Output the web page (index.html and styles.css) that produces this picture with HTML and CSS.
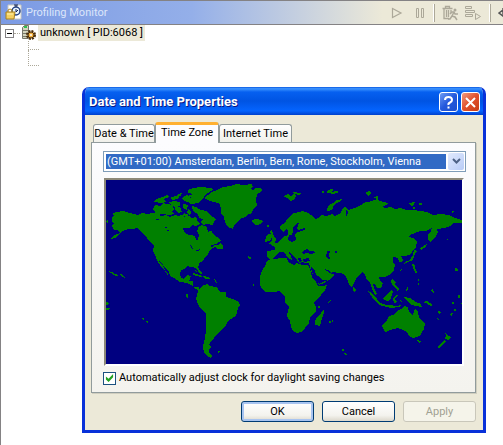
FILE: index.html
```
<!DOCTYPE html>
<html lang="en">
<head>
  <meta charset="UTF-8" />
  <meta name="viewport" content="width=device-width, initial-scale=1" />
  <title>Profiling Monitor</title>
  <link rel="stylesheet" href="styles.css">
</head>
<body>

  <main class="view">
    <header class="view-bar">
      <svg class="view-icon" width="17" height="17" viewBox="0 0 17 17">
        <path d="M3 1h13v14H3z" fill="#fff" stroke="#c8c8c0"/>
        <circle cx="11" cy="7" r="4" fill="#e8f4ff" stroke="#224080" stroke-width="1.5"/>
        <path d="M9 1h4M11 1v2M11 5v3l2-2" fill="none" stroke="#102050"/>
        <path d="M3 8V6q2-2 4 0v2" fill="none" stroke="#b08820"/>
        <path d="M1 8h9l-1 7H1z" fill="#f5d060" stroke="#a88020"/>
        <path d="M2 10h6" stroke="#fff3b0"/>
      </svg>
      <h1>Profiling Monitor</h1>
      <div class="tools">
        <button aria-label="Resume"><svg width="12" height="12" viewBox="0 0 12 12"><path d="M1.5 1.5v9L10 6z" fill="none" stroke="#aca899" stroke-width="1.2"/></svg></button>
        <button aria-label="Pause"><svg width="12" height="12" viewBox="0 0 12 12"><path d="M2.5 1.5h2v9h-2zM7.5 1.5h2v9h-2z" fill="none" stroke="#aca899"/></svg></button>
        <span class="sep"></span>
        <button aria-label="Run garbage collection"><svg width="16" height="16" viewBox="0 0 16 16"><path d="M.5 3.500h10M3.500 3V1.500h4V3M2 4v9.500h5M4.500 5v7M6.500 5v7M9 5v3" fill="none" stroke="#aca899" stroke-width="1.3"/><circle cx="13" cy="5" r="1.500" fill="#aca899"/><path d="M12 7l-2 4 3 1 2 3M10 11l-2 3H6M8 9l2-2h2l1 2h3" fill="none" stroke="#aca899" stroke-width="1.5"/></svg></button>
        <button aria-label="Collect references"><svg width="17" height="16" viewBox="0 0 17 16"><path d="M.5 1.500h6v2h-6zM.5 5.500h9v2h-9zM.5 9.500h7v2h-7zM10.500 8.500v6l5-3z" fill="none" stroke="#aca899"/></svg></button>
        <span class="sep"></span>
        <button class="cut" aria-label="Refresh"><svg width="12" height="14" viewBox="0 0 12 14"><path d="M1 7l4-3v6zM5 4V2M5 7h7" fill="none" stroke="#555" stroke-width="1.5"/></svg></button>
      </div>
    </header>

    <ul class="tree">
      <li>
        <div class="node">
          <button class="toggle" aria-label="Collapse"></button>
          <span class="dots"></span>
          <svg width="15" height="16" viewBox="0 0 15 16">
            <path d="M1.500 2.500l2-2h4v13h-6z" fill="#d4d4bc" stroke="#77776a"/>
            <path d="M3 2h3" stroke="#30c050" stroke-width="2"/>
            <path d="M2 5.500h5M2 8.500h5M2 11.500h5" stroke="#77776a"/>
            <circle cx="10" cy="10" r="4" fill="none" stroke="#4a2c08" stroke-width="2" stroke-dasharray="2 1.140"/>
            <circle cx="10" cy="10" r="3" fill="#f0b040" stroke="#4a2c08"/>
            <circle cx="10" cy="10" r="1" fill="#fff"/>
          </svg>
          <span class="label">unknown [ PID:6068 ]</span>
        </div>
        <div class="branch"></div>
        <div class="branch"></div>
      </li>
    </ul>
  </main>

  <section class="dialog" role="dialog" aria-labelledby="dialog-title">
    <header class="title-bar">
      <h2 id="dialog-title">Date and Time Properties</h2>
      <button class="help" aria-label="Help"><svg width="11" height="13" viewBox="0 0 11 13"><path d="M2 4q0-3 3.500-3T9 4q0 1.500-2 2.500T5.500 9M5.500 10.500v2" fill="none" stroke="#fff" stroke-width="2"/></svg></button>
      <button class="close" aria-label="Close"><svg width="11" height="11" viewBox="0 0 11 11"><path d="M1 1l9 9M10 1l-9 9" stroke="#fff" stroke-width="2"/></svg></button>
    </header>

    <div class="dialog-body">
      <div class="tabs" role="tablist">
        <button role="tab">Date &amp; Time</button>
        <button role="tab" class="active" aria-selected="true">Time Zone</button>
        <button role="tab">Internet Time</button>
      </div>

      <div class="panel">
        <div class="combo">
          <select aria-label="Time zone">
            <option>(GMT+01:00) Amsterdam, Berlin, Bern, Rome, Stockholm, Vienna</option>
          </select>
          <span class="arrow"><svg width="9" height="7" viewBox="0 0 9 7"><path d="M1 1l3.500 3.500L8 1" fill="none" stroke="#4d6185" stroke-width="2"/></svg></span>
        </div>

        <svg class="map" viewBox="106 180 356 184" role="img" aria-label="World map">
          <g class="land">
            <!-- North and Central America -->
            <path d="M112 217L114 216 113 213 117 212 122 211 127 212 129 213 134 214 138 215 142 213 147 214 153 213 158 214 161 216 166 215 170 217 175 215 178 216 182 215 185 217 189 216 192 218 195 217 197 219 196 223 198 224 196 226 192 225 189 228 183 228 184 232 186 234 190 235 195 236 196 240 198 240 199 235 197 231 199 226 202 225 207 227 208 232 210 231 211 230 214 235 217 237 221 241 216 244 209 246 212 247 215 245 219 245 220 243 223 246 223 249 218 249 215 247 210 250 208 254 205 257 203 261 200 262 199 265 197 267 199 269 202 273 201 275 198 271 196 268 191 267 187 266 184 269 181 270 180 274 181 278 184 279 187 275 191 276 189 281 193 281 193 287 199 287 199 290 195 289 191 285 187 283 180 282 174 278 170 276 169 272 165 268 162 263 159 261 163 266 165 270 168 274 169 277 165 271 161 267 157 260 155 255 153 251 154 245 150 242 147 238 144 234 140 231 137 228 132 229 128 229 125 230 120 233 117 237 111 239 113 236 120 233 118 230 114 230 112 226 114 223 112 222z"/>
            <!-- Arctic islands -->
            <path d="M188 190l5-2 7-1 12 1 1 2-5 3-3 2-2 4-3 2-2 2-7 1-4-3 5-3-5-2 6-2-5-1z"/>
            <path d="M154 202l2-3 7-2 4-2 2 2-5 2 2 3-5 1zM153 209l2-4 5 1 3-3 4 1 5 1 2 4-2 2 2 3-5 1-7-1-5 1zM171 197l5-1 4 1-3 2-5 1zM178 194l4-1-1 3-4 1zM169 202l5-1 6 1v4l-5 1-4-2zM176 206l4 1 2 5-4 1-3-4zM183 204l5 1-1 5-4-2zM184 196l4-1 3 4-4 3-5-3zM184 213l5 2-3 2-4-2z"/>
            <path d="M192 206l4 1 5 3 6 1 3 4 6 4-2 3-1 3-6-1-4 1-3-3 3-3-4-1-1-4-5-3zM188 209l3 3-1 4-3-3zM193 223l4-2 3 3-4 2z"/>
            <!-- Greenland and Iceland -->
            <path d="M204 198L208 195 212 192 217 190 223 187 230 186 236 184 244 185 252 184 253 187 250 188 253 190 256 188 261 188 262 190 259 193 257 194 256 200 257 206 253 209 252 213 247 215 245 217 240 219 237 223 234 225 233 229 230 228 227 226 225 222 224 217 221 213 221 208 219 203 213 202 208 200z"/>
            <path d="M252 220l4-1 5 1 2 1-2 3-5 1-3-2z"/>
            <!-- South America -->
            <path d="M199 289l5-4 3-1 2 2 8 1 2 4 2 1h5v5l3 1 4 1 6 3 1 3-2 3-1 4-1 4-5 3-3 2-2 4-3 4-3 2-3 3-3 4-3 3-2 4 2 2-2 3v3l3 3-1 2-3-1-4-4-1-6 1-5 1-4 1-8v-17l-5-4-3-5-2-5 1-4 1-4z"/>
            <!-- Africa -->
            <path d="M267 261L271 259 275 259 280 258 287 258 288 262 294 265 297 263 302 265 308 265 310 269 312 277 316 282 318 286 322 286 327 285 325 290 321 295 317 299 314 303 316 307 316 312 312 315 310 318 309 323 306 326 304 330 301 332 297 333 294 332 291 327 290 321 287 316 288 311 289 307 285 302 285 296 282 294 279 291 274 292 265 292 262 289 260 285 260 277 262 271 265 266z"/>
            <path d="M324 309v4l-2 5-2 8-5-1v-4l3-5 3-3z"/>
            <!-- Europe and Asia -->
            <path d="M280 228L281 225 285 223 288 218 291 215 294 213 299 212 303 211 308 213 313 216 315 219 318 218 321 215 326 216 332 214 335 216 341 213 342 209 345 207 348 210 351 209 355 208 361 205 363 203 367 202 372 201 377 199 380 201 388 203 387 205 382 206 384 208 391 207 395 209 401 208 406 210 413 210 420 211 427 212 433 215 441 214 449 215 455 218 462 220 462 223 453 223 450 226 444 228 437 229 438 232 436 236 433 239 430 242 428 240 428 235 431 231 432 228 426 231 420 231 415 233 410 235 408 237 414 238 417 242 416 247 413 250 411 254 406 256 401 256 403 260 401 262 399 262 398 258 393 257 393 262 395 265 394 270 391 274 385 277 379 277 380 281 383 283 381 288 377 288 375 284 373 284 374 288 377 294 375 295 372 289 370 282 367 280 365 275 363 272 359 275 356 279 353 285 352 287 350 286 346 277 343 274 340 273 331 272 334 275 329 280 324 283 319 285 316 279 312 273 310 267 309 263 305 263 302 262 299 263 297 260 295 258 292 255 290 252 288 253 291 256 292 260 289 259 286 255 284 252 280 252 277 254 274 258 270 260 267 257 267 251 275 250 275 247 270 244 272 243 277 243 281 239 285 236 288 235 288 231 286 229 283 232z"/>
            <path d="M266 236l3-2 3 1-1 5-6 2zM270 231l2-1 1 4 3 5-1 4-6 1 3-4z"/>
            <!-- Polar islands -->
            <path d="M285 195l3-1 3 2 3-2 2 2-2 4-4 1-3-3-3-1zM293 192l8 1-2 2-5-1zM319 192l5-1v2zM326 192l5-3 3 1-3 2 6-1 2 1-5 2-7-1zM327 211l1-5 5-3 4-3 6-1-4 3-5 3-2 5zM365 193l4-2 2 2-2 3zM374 197l4-1v3l-4-1zM409 203l6-1-1 3-3 1zM419 203h3v2h-3zM450 212l4-1-1 2zM413 207l3 1-3 1z"/>
            <!-- Japan, Taiwan, Philippines -->
            <path d="M414 250l3 1-2 2-2 7-5 2-4 2 1-2 5-2 3-5zM420 248l7-4-1 3-5 3zM400 270l2-1-1 3zM412 264l3 1 1 7-2-1zM392 279l4 3-1 3 4 3-2 1-4-3-2-4zM397 287l3 2-3 2zM381 276l4-1-1 2zM353 287l3 3-2 2-1-3z"/>
            <!-- Indonesia and New Guinea -->
            <path d="M368 291l4 2 5 6 4 5-1 1-6-5zM380 303l7 2 3 1-1 1-8-1zM383 298l4-4 4-4 2 2-2 6-3 3-4-1zM393 298l4-3 1 1-4 3 3 3-3 1zM388 305l9 1 4-1-1 2-11 1zM399 300l4 1-2 1zM404 297l6 1 6 4 5 2 1 3-7-1-5-2-5-5zM422 302l5-1 6 4-2 1-5-3z"/>
            <!-- Australia and New Zealand -->
            <path d="M387 321l1-4 7-3 3-4 3-1 3-3 4 1 1 5 4 3 2-7 3 4 1 5 3 4 3 3-1 5-3 5-2 2-6 2-3-1-3-5-4-2-5-2-5 1-5 2-3 1-2-4-1-3zM417 340l4 1-2 2zM445 332l3 4 3 1-3 3-3-1 1-3zM444 340l2 1-5 6-3 1 1-3z"/>
            <!-- Caribbean and Pacific specks -->
            <path d="M193 273l4 1 5 2-1 1-8-2zM195 270l2 1-1 1zM203 276l5 1 3 2h-6zM213 279l3 1 1 4-2-3zM108 271l4 1 2 2 5 1 2-1 4 4-2-1-3-2-4 1-5-3zM106 302l3 1-1 2h-2zM106 308h4l-1 2h-3zM140 317l5 2-2 1zM146 321l3 1-2 1zM186 294h2v4l-2-1zM106 221l2-1v3l-2-1zM248 256l4 2-3 1zM252 285l2-1v3zM216 352l4-1-1 2zM267 225h2v2h-2zM327 303l4-4v2l-3 2zM318 306h2v2h-2zM329 321h2v2h-2zM332 320h1v2h-1zM342 349h2v2h-2zM344 353l3 1-1 2zM406 290l2-4v4l-2 1zM415 271h2v2h-2zM418 279h1v2h-1zM418 283h1v2h-1zM431 290l2-1 1 4-2-1zM438 311l3 1-2 2zM436 318l3 1-1 1zM449 314l4-1-1 3zM452 302h2v2h-2zM454 309h2v2h-2zM458 295h2v3h-2zM455 268l3 1v2h-3zM438 236l3 1zM447 239h1v1h-1zM461 303h1v1h-1z"/>
          </g>
          <!-- Inland seas and lakes -->
          <g class="water">
            <path d="M289 235L292 235 293 232 293 228 297 223 299 223 297 228 298 230 305 228 305 230 298 232 295 234 296 240 292 242 288 240z"/>
            <path d="M302 253L304 250 308 249 309 251 314 251 315 253 311 254 307 253 303 254zM327 251h3l-1 4 1 3-1 1-3-2zM335 251h2v2h-2z"/>
            <path d="M156 219h3v1h-3zM165 227h2v1h-2zM167 230h2v1h-2zM188 244l4 2 1 4-2-3zM195 251l5-2-2 2z"/>
            <path d="M298 258h3l1 3-3 1zM303 259l6-1 1 3-6 1zM311 267l3 2 3 7 3 1 2 3 6 0-5 2-4 2-4-6-3-6zM324 269l4 1 3 3 6 1-5 0-5-3zM346 209l2 3-1 5-1-2z"/>
          </g>
        </svg>

        <label class="check"><input type="checkbox" checked /> Automatically adjust clock for daylight saving changes</label>
      </div>

      <div class="actions">
        <button class="default">OK</button>
        <button>Cancel</button>
        <button disabled>Apply</button>
      </div>
    </div>
  </section>

</body>
</html>
```
FILE: styles.css
```
* {
  box-sizing: border-box;
}
body {
  margin: 0;
  min-height: 100vh;
  font-family: Roboto, "Liberation Sans", sans-serif;
  font-size: 11px;
  line-height: 14px;
  color: #000;
  background: #fff;
  overflow: hidden;
}
h1, h2, ul {
  margin: 0;
  padding: 0;
}
button, select {
  font: inherit;
  color: inherit;
  padding: 0;
  border: 0;
  background: none;
}
svg {
  display: block;
}

/* view behind the dialog */
.view {
  min-height: 100vh;
  border-top: 1px solid #848284;
  border-left: 1px solid #848284;
}
.view-bar {
  display: flex;
  align-items: center;
  height: 24px;
  padding-left: 4px;
  border-bottom: 1px solid #848284;
  background: linear-gradient(90deg, #7b9ae4, #94afe9 38%, #ece9d8 76%);
}
.view-bar h1 {
  margin-left: 4px;
  font-size: 11px;
  font-weight: normal;
  color: #dce6fa;
}
.tools {
  display: flex;
  align-items: center;
  gap: 7px;
  margin-left: auto;
}
.tools button:nth-child(1) {
  margin-right: 4px;
}
.sep {
  width: 2px;
  height: 18px;
  border-left: 1px solid #fff;
  border-right: 1px solid #aca899;
}
.cut {
  width: 5px;
  overflow: hidden;
}
.tree {
  list-style: none;
  padding-left: 4px;
}
.node {
  display: flex;
  align-items: center;
  height: 16px;
}
.toggle {
  width: 9px;
  height: 9px;
  border: 1px solid #848284;
  background: linear-gradient(#000, #000) center / 5px 1px no-repeat;
}
.dots {
  width: 6px;
  margin-right: 1px;
  border-top: 1px dotted #aca899;
}
.label {
  margin-left: 2px;
  padding: 1px 2px;
  background: #ece9d8;
}
.branch {
  width: 11px;
  height: 16px;
  margin-left: 23px;
  border-left: 1px dotted #aca899;
  border-bottom: 1px dotted #aca899;
}
.branch:nth-child(2) {
  height: 9px;
}

/* dialog window */
.dialog {
  position: absolute;
  top: 87px;
  left: 82px;
  right: 8px;
  max-width: 404px;
  border: 3px solid #0831d9;
  border-top: 0;
  border-radius: 7px 7px 0 0;
  background: #ece9d8;
  overflow: hidden;
}
.title-bar {
  display: flex;
  align-items: center;
  gap: 3px;
  height: 28px;
  padding: 2px 3px 0 4px;
  background: linear-gradient(#0a58e0, #3c94ff 6%, #0660f0 18%, #0054e3 50%, #0464ff 85%, #0040cc);
}
.title-bar h2 {
  flex: 1;
  font-size: 13px;
  color: #fff;
  text-shadow: 1px 1px #0a1883;
}
.title-bar button {
  display: flex;
  align-items: center;
  justify-content: center;
  width: 19px;
  height: 20px;
  border: 1px solid #fff;
  border-radius: 3px;
  background: linear-gradient(135deg, #6f9cf4, #2358dc 50%, #1c50d0);
}
.title-bar .close {
  background: linear-gradient(135deg, #f09a80, #e0502c 50%, #c83c14);
}
.dialog-body {
  padding: 7px 7px 8px 6px;
}
.tabs {
  display: flex;
  align-items: flex-end;
  height: 20px;
  padding-left: 2px;
}
.tabs button {
  height: 18px;
  width: 62px;
  border: 1px solid #919b9c;
  border-bottom: 0;
  border-radius: 3px 3px 0 0;
  background: linear-gradient(#fff, #f0f0ea);
  white-space: nowrap;
}
.tabs button:last-child {
  width: 73px;
}
.tabs .active {
  z-index: 1;
  width: 64px;
  height: 21px;
  margin-bottom: -1px;
  padding-bottom: 2px;
  border-top: 3px solid #ffb030;
  background: #fcfcfe;
}
.panel {
  padding: 8px 9px 7px 11px;
  border: 1px solid #919b9c;
  box-shadow: 1px 1px #d0cebf;
  background: linear-gradient(#fcfcfe, #f4f3ee);
}
.combo {
  display: flex;
  height: 21px;
  padding: 1px;
  border: 1px solid #7f9db9;
  background: #fff;
}
.combo select {
  flex: 1;
  min-width: 0;
  margin: 1px 2px 1px 1px;
  padding-left: 1px;
  appearance: none;
  border-radius: 0;
  background: #316ac5;
  color: #fff;
}
.arrow {
  display: flex;
  align-items: center;
  justify-content: center;
  width: 16px;
  border-radius: 2px;
  background: linear-gradient(135deg, #e1eafe, #b8cbf6);
}
.map {
  width: calc(100% - 3px);
  margin: 6px 0 5px 1px;
  border: 2px solid;
  border-color: #8c8878 #fff #fff #8c8878;
  background: #000080;
  shape-rendering: crispEdges;
}
.land {
  fill: #008000;
}
.water {
  fill: #000080;
}
.check {
  display: flex;
  align-items: center;
  gap: 3px;
  white-space: nowrap;
}
.check input {
  appearance: none;
  display: grid;
  place-items: center;
  width: 13px;
  height: 13px;
  margin: 0;
  border: 1px solid #1c5180;
  background: #fff;
}
.check input:checked::before {
  content: "";
  width: 9px;
  height: 8px;
  background: #21a121;
  clip-path: polygon(10% 30%, 40% 60%, 90% 0, 90% 40%, 40% 100%, 10% 70%);
}
.actions {
  display: flex;
  justify-content: flex-end;
  gap: 8px;
  margin-top: 8px;
}
.actions button {
  width: 73px;
  height: 21px;
  border: 1px solid #003c74;
  border-radius: 3px;
  background: linear-gradient(#fff, #f4f3ee 70%, #dcd8cc);
}
.actions .default {
  box-shadow: inset 0 0 0 2px #a8c4f0;
}
.actions button:disabled {
  border-color: #c9c7ba;
  background: #f5f4ea;
  color: #a1a192;
}
```
